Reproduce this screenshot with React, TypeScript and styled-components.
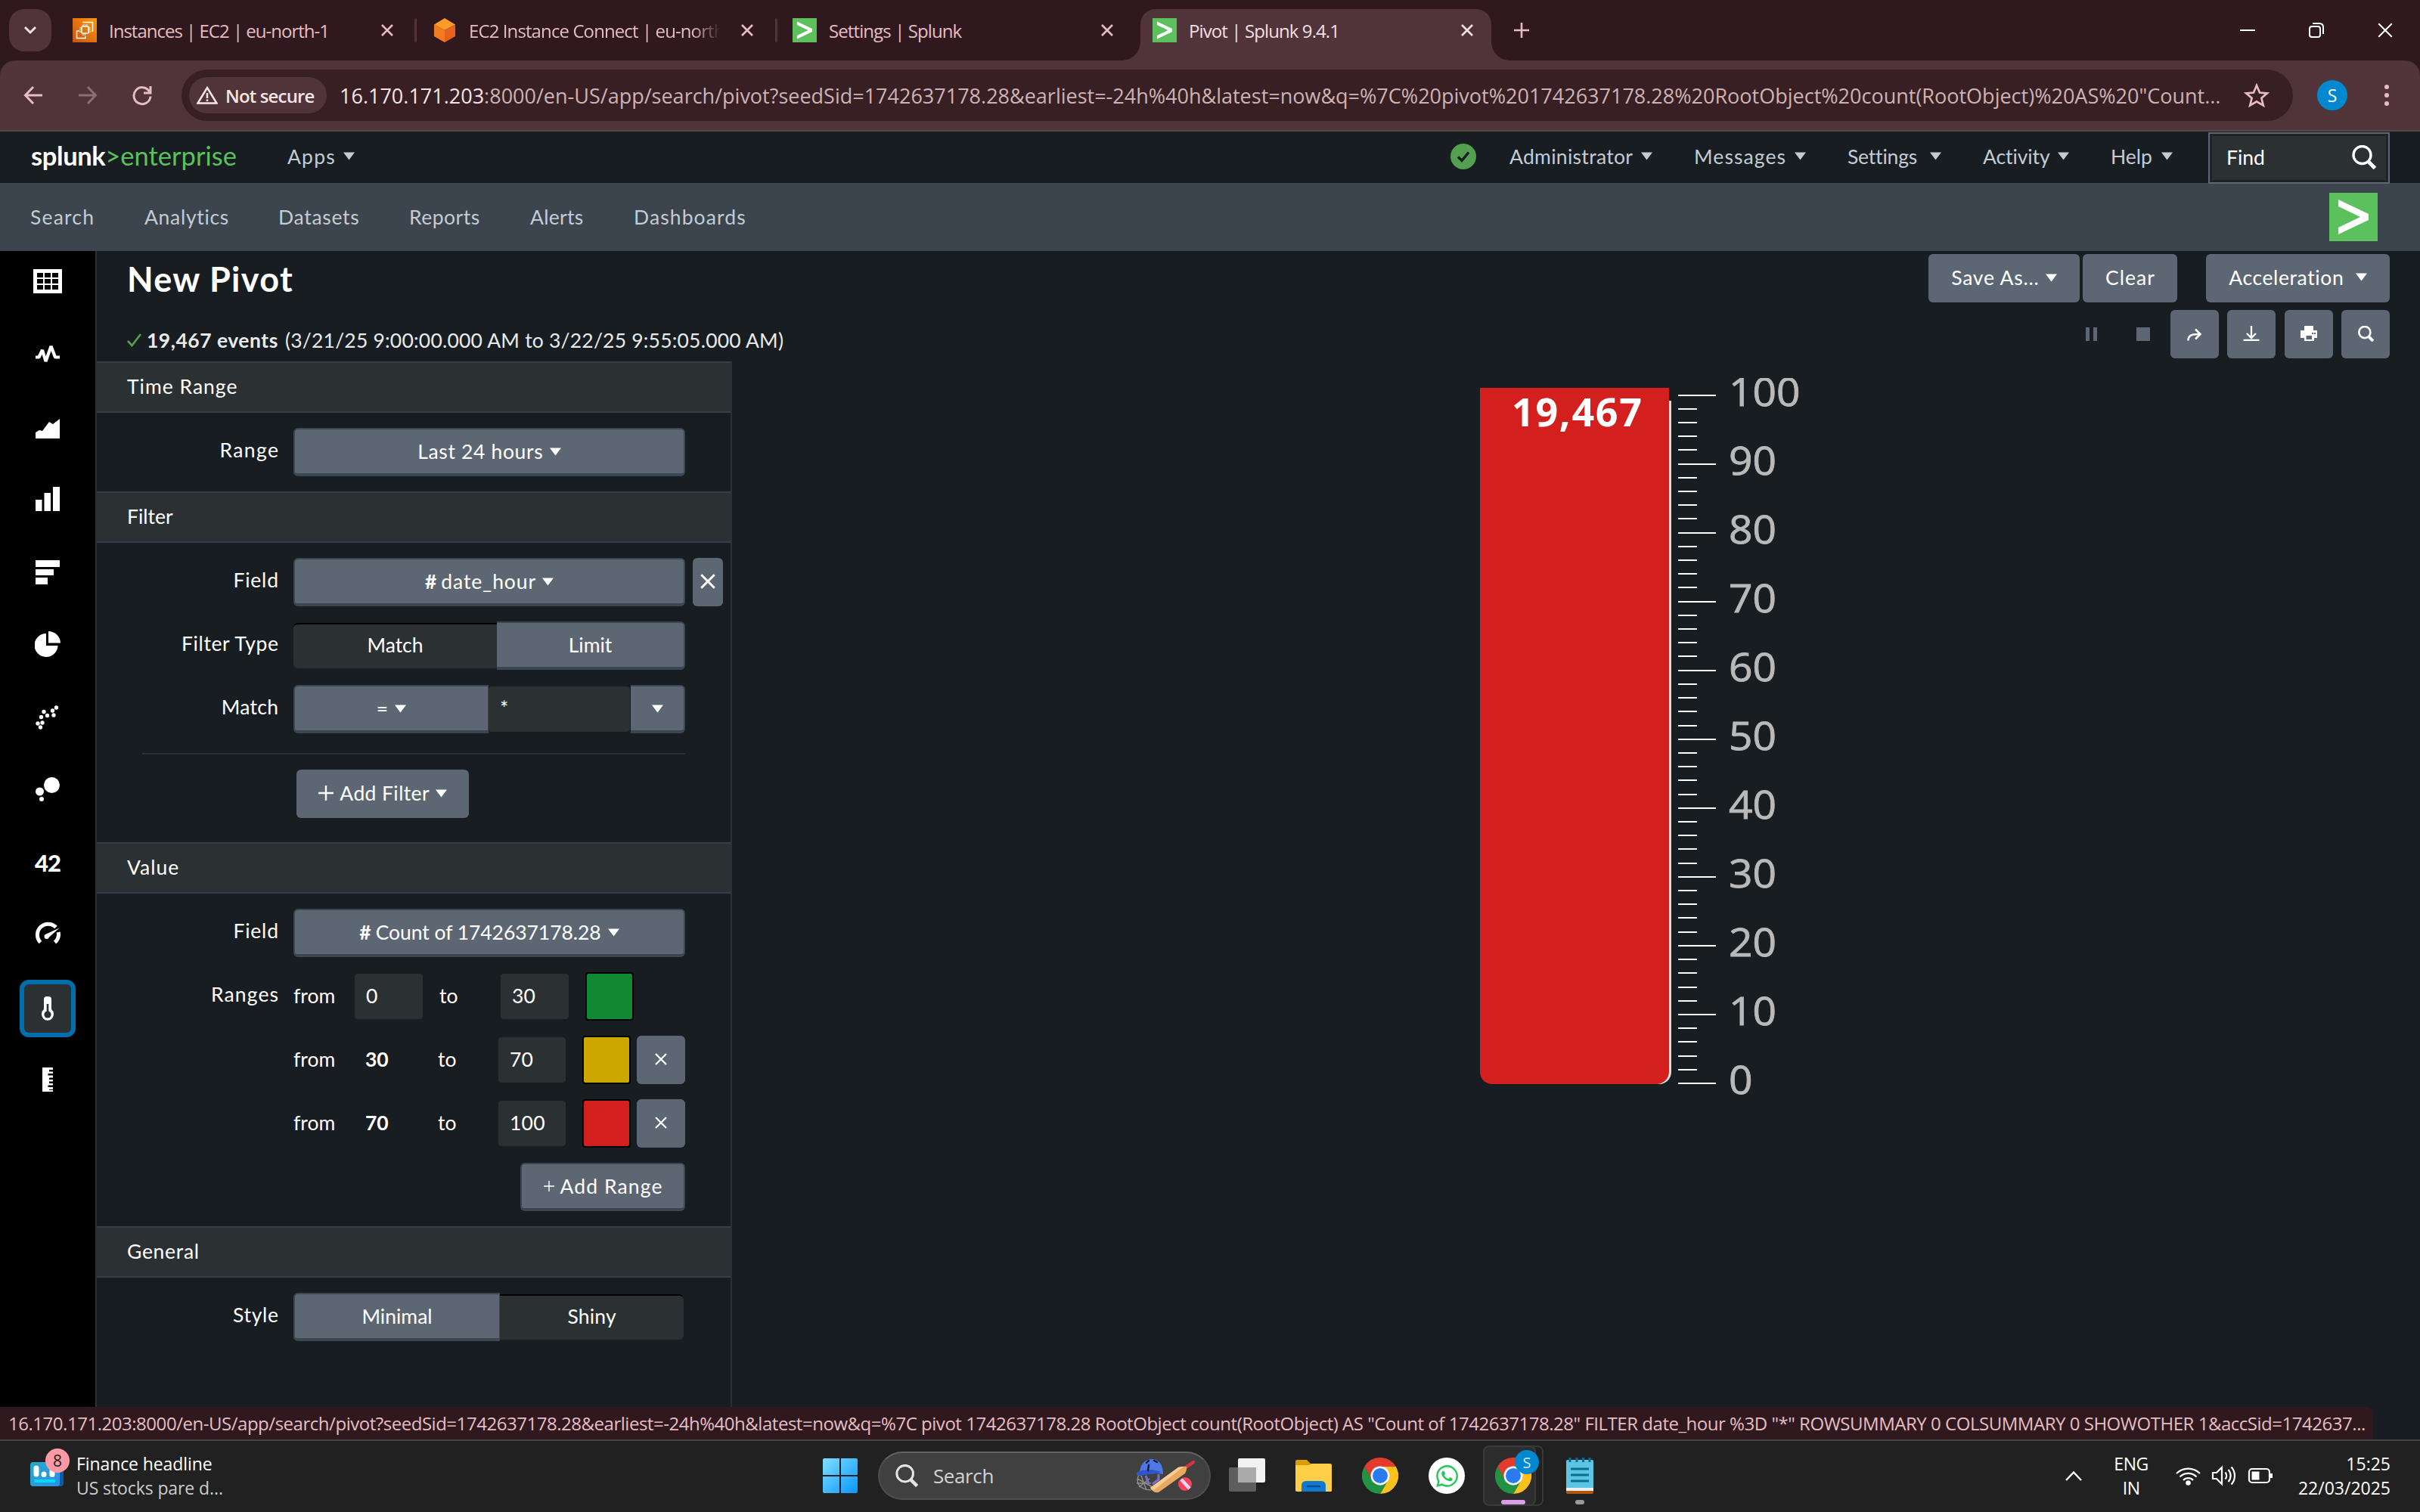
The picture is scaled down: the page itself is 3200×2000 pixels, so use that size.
import React from "react";
import styled, { createGlobalStyle } from "styled-components";
import { FaWhatsapp } from "react-icons/fa";

const ui = `"Open Sans", "Noto Sans", sans-serif`;
const app = `Lato, "Open Sans", sans-serif`;

const c = {
  strip: "#2f191e",
  toolbar: "#503439",
  omni: "#381f23",
  pink: "#e6bdc3",
  page: "#171d21",
  panel: "#2b3033",
  line: "#33414c",
  button: "#5c6773",
  edge: "#3a4752",
  nav: "#3c444d",
  navText: "#c3cbd4",
  green: "#5cc05c",
};

const Global = createGlobalStyle`
  * { box-sizing: border-box; }
  body { margin: 0; background: ${c.page}; }
  svg { display: block; flex: none; }
`;

const Screen = styled.div`
  width: 3200px;
  height: 2000px;
  display: flex;
  flex-direction: column;
  overflow: hidden;
  font-family: ${app};
  font-size: 26.5px;
  color: #fff;
  background: ${c.page};
`;

/* Text run: optional reserved width, tracking and weight. The negative margin
   drops the tracking that follows the last letter. */
const Txt = styled.span<{ $w?: number; $ls?: number; $b?: boolean }>`
  flex: none;
  white-space: pre;
  width: ${(p) => (p.$w ? `${p.$w}px` : "auto")};
  letter-spacing: ${(p) => p.$ls ?? 0}px;
  margin-right: ${(p) => (p.$w ? 0 : -(p.$ls ?? 0))}px;
  font-weight: ${(p) => (p.$b ? 700 : 400)};
`;

/* ---------- browser ---------- */

const TabStrip = styled.div`
  flex: none;
  height: 80px;
  display: flex;
  align-items: center;
  background: ${c.strip};
  font-family: ${ui};
  font-size: 24px;
  color: ${c.pink};
`;

const TabSearch = styled.div`
  width: 56px;
  height: 56px;
  margin-left: 12px;
  border-radius: 20px;
  background: ${c.toolbar};
  display: flex;
  align-items: center;
  justify-content: center;
`;

const Tab = styled.div<{ $w: number; $left: number }>`
  flex: none;
  width: ${(p) => p.$w}px;
  height: 56px;
  padding-left: ${(p) => p.$left}px;
  display: flex;
  align-items: center;
`;

const ActiveTab = styled.div`
  position: relative;
  flex: none;
  align-self: flex-end;
  width: 464px;
  height: 68px;
  padding: 0 0 12px 16px;
  border-radius: 20px 20px 0 0;
  background: ${c.toolbar};
  color: #f4dfe2;
  display: flex;
  align-items: center;
  &::before,
  &::after {
    content: "";
    position: absolute;
    bottom: 0;
    width: 24px;
    height: 24px;
  }
  &::before {
    left: -24px;
    background: radial-gradient(circle at 0 0, transparent 23.5px, ${c.toolbar} 24px);
  }
  &::after {
    right: -24px;
    background: radial-gradient(circle at 100% 0, transparent 23.5px, ${c.toolbar} 24px);
  }
`;

const TabTitle = styled.span<{ $w: number; $fade?: boolean; $ls?: number }>`
  flex: none;
  width: ${(p) => p.$w}px;
  margin-left: 16px;
  padding-top: 1px;
  overflow: hidden;
  white-space: pre;
  letter-spacing: ${(p) => p.$ls ?? -0.9}px;
  ${(p) => p.$fade && "mask-image: linear-gradient(90deg, #000 87%, transparent 98%);"}
`;

const Divider = styled.div`
  width: 3px;
  height: 32px;
  border-radius: 2px;
  background: ${c.toolbar};
`;

const WindowButtons = styled.div`
  margin-left: auto;
  padding-right: 36px;
  display: flex;
  gap: 71px;
`;

const ToolbarBack = styled.div`
  flex: none;
  background: ${c.strip};
`;

const Toolbar = styled.div`
  height: 94px;
  padding: 12px 0 0;
  border-bottom: 2px solid #524a48;
  border-radius: 20px 20px 0 0;
  background: ${c.toolbar};
  display: flex;
  align-items: flex-start;
`;

const ToolIcons = styled.div`
  width: 240px;
  height: 68px;
  padding-left: 30px;
  display: flex;
  align-items: center;
  gap: 44px;
`;

const Omnibox = styled.div`
  width: 2792px;
  height: 68px;
  padding-left: 10px;
  border-radius: 34px;
  background: ${c.omni};
  display: flex;
  align-items: center;
  font-family: ${ui};
`;

const Chip = styled.div`
  flex: none;
  width: 182px;
  height: 48px;
  padding-left: 10px;
  border-radius: 24px;
  background: ${c.toolbar};
  color: #f6e4e6;
  display: flex;
  align-items: center;
  gap: 10px;
  font-size: 24px;
  font-weight: 600;
  letter-spacing: -0.85px;
  white-space: pre;
`;

const Url = styled.div`
  flex: none;
  width: 2518px;
  margin-left: 17px;
  font-size: 27px;
  white-space: pre;
  color: #cdb3b6;
  b {
    font-weight: 400;
    color: #f6e4e6;
  }
`;

const Avatar = styled.div`
  width: 40px;
  height: 40px;
  margin: 14px 49px 0 32px;
  border-radius: 50%;
  background: #0288d1;
  color: #fff;
  display: flex;
  align-items: center;
  justify-content: center;
  font: 23px ${ui};
`;

const MoreDots = styled.div`
  height: 68px;
  display: flex;
  flex-direction: column;
  justify-content: center;
  gap: 5px;
  i {
    width: 6px;
    height: 6px;
    border-radius: 50%;
    background: ${c.pink};
  }
`;

/* ---------- splunk header ---------- */

const TopBar = styled.div`
  flex: none;
  height: 68px;
  padding-left: 41px;
  display: flex;
  align-items: center;
  color: ${c.navText};
`;

const Brand = styled.div`
  width: 339px;
  padding-bottom: 5px;
  font-size: 34.5px;
  white-space: pre;
  color: ${c.green};
  b {
    color: #fff;
    letter-spacing: -0.4px;
  }
`;

const Menu = styled.div<{ $w: number }>`
  flex: none;
  width: ${(p) => p.$w}px;
  padding-bottom: 3px;
  display: flex;
  align-items: center;
  gap: 10px;
`;

const FindBox = styled.div`
  align-self: flex-start;
  width: 240px;
  height: 68px;
  margin-top: 1px;
  padding: 0 16px 2px 22px;
  border: 2px solid ${c.button};
  background: ${c.panel};
  box-shadow: inset 0 0 0 3px #1d2326;
  color: #fff;
  display: flex;
  align-items: center;
  justify-content: space-between;
  z-index: 1;
`;

const SubNav = styled.div`
  flex: none;
  height: 90px;
  padding: 0 56px 0 40px;
  background: ${c.nav};
  color: ${c.navText};
  display: flex;
  align-items: center;
`;

const AppLogo = styled.div`
  margin-left: auto;
`;

/* ---------- body ---------- */

const Body = styled.div`
  position: relative;
  flex: none;
  height: 1572px;
  display: flex;
`;

const Rail = styled.div`
  flex: none;
  width: 128px;
  background: #000;
  border-right: 2px solid ${c.panel};
  display: flex;
  flex-direction: column;
  align-items: center;
`;

const RailItem = styled.div<{ $h: number }>`
  width: 100%;
  height: ${(p) => p.$h}px;
  display: flex;
  align-items: center;
  justify-content: center;
  font-size: 31px;
  font-weight: 900;
  letter-spacing: -1px;
`;

const RailSelected = styled.div`
  width: 74px;
  height: 76px;
  border: 6px solid #006eaa;
  border-radius: 12px;
  background: ${c.panel};
  display: flex;
  align-items: center;
  justify-content: center;
`;

const Content = styled.div`
  flex: 1;
  display: flex;
  flex-direction: column;
`;

const Header = styled.div`
  height: 146px;
  padding: 0 40px;
  display: flex;
  justify-content: space-between;
`;

const Title = styled.h1`
  margin: 0;
  height: 76px;
  line-height: 75px;
  font-size: 45px;
  font-weight: 700;
  letter-spacing: 1.3px;
`;

const Summary = styled.div`
  padding-top: 26px;
  display: flex;
  align-items: center;
  color: #e8eaec;
  line-height: 32px;
`;

const Actions = styled.div`
  display: flex;
  flex-direction: column;
  align-items: flex-end;
  gap: 10px;
  padding-top: 3px;
`;

const ActionRow = styled.div`
  display: flex;
  align-items: center;
`;

const Button = styled.div<{ $w: number; $ml?: number; $gap?: number; $mt?: number }>`
  flex: none;
  width: ${(p) => p.$w}px;
  height: 64px;
  margin-left: ${(p) => p.$ml ?? 0}px;
  margin-top: ${(p) => p.$mt ?? 0}px;
  border-radius: 6px;
  background: ${c.button};
  display: flex;
  align-items: center;
  justify-content: center;
  gap: ${(p) => p.$gap ?? 9}px;
  white-space: nowrap;
  padding-bottom: 2px;
`;

const Columns = styled.div`
  flex: 1;
  display: flex;
`;

const Form = styled.div`
  width: 840px;
  border-right: 2px solid ${c.panel};
`;

const SectionHead = styled.div`
  height: 68px;
  padding: 0 0 3px 40px;
  border-top: 2px solid ${c.line};
  border-bottom: 2px solid ${c.line};
  background: ${c.panel};
  display: flex;
  align-items: center;
`;

const Section = styled.div<{ $pb?: number }>`
  padding: 20px 0 ${(p) => p.$pb ?? 20}px;
  display: flex;
  flex-direction: column;
  gap: 20px;
`;

const Row = styled.div`
  height: 64px;
  display: grid;
  grid-template-columns: 240px auto;
  column-gap: 20px;
`;

const RowLabel = styled.div`
  padding-bottom: 7px;
  display: flex;
  align-items: center;
  justify-content: flex-end;
`;

const Controls = styled.div`
  display: flex;
  align-items: center;
`;

const FieldButton = styled(Button)<{ $side?: "l" | "r" }>`
  border: 2px solid ${c.edge};
  border-bottom-width: 4px;
  padding-bottom: 0;
  border-radius: ${(p) => (p.$side === "l" ? "6px 0 0 6px" : p.$side === "r" ? "0 6px 6px 0" : "6px")};
  ${(p) => p.$side === "l" && "border-right-width: 1px;"}
  ${(p) => p.$side === "r" && "border-left-width: 0;"}
`;

const Hash = styled.b`
  margin-right: -3px;
`;

const Pressed = styled.div<{ $w: number; $r: string }>`
  width: ${(p) => p.$w}px;
  height: 60px;
  padding-bottom: 4px;
  border-top: 2px solid #000;
  border-radius: ${(p) => p.$r};
  background: ${c.panel};
  display: flex;
  align-items: center;
  justify-content: center;
`;

const Input = styled.div<{ $w: number }>`
  flex: none;
  width: ${(p) => p.$w}px;
  height: 60px;
  padding: 0 0 3px 15px;
  border-radius: 4px;
  background: ${c.panel};
  display: flex;
  align-items: center;
  letter-spacing: 0.2px;
`;

const Rule = styled.div`
  height: 2px;
  margin: 6px 60px 0;
  background: ${c.panel};
`;

const Cell = styled.span<{ $w: number; $b?: boolean; $pad?: number }>`
  flex: none;
  width: ${(p) => p.$w}px;
  padding: 0 0 3px ${(p) => p.$pad ?? 0}px;
  font-weight: ${(p) => (p.$b ? 700 : 400)};
`;

const Swatch = styled.div<{ $c: string }>`
  width: 64px;
  height: 64px;
  margin-left: 22px;
  border: 2px solid #000;
  border-radius: 4px;
  background: ${(p) => p.$c};
`;

const Chart = styled.div`
  flex: 1;
  padding: 22px 0 0 989px;
`;

const StatusBar = styled.div`
  position: absolute;
  left: 0;
  bottom: 0;
  width: 3137px;
  height: 43px;
  padding: 0 0 1px 11px;
  border-top-right-radius: 8px;
  background: ${c.strip};
  color: ${c.pink};
  font: 24px ${ui};
  letter-spacing: -0.47px;
  white-space: pre;
  overflow: hidden;
  display: flex;
  align-items: center;
`;

/* ---------- taskbar ---------- */

const Taskbar = styled.div`
  flex: none;
  height: 96px;
  padding: 0 39px 2px 40px;
  border-top: 2px solid #444;
  background: #212121;
  font-family: ${ui};
  display: flex;
  align-items: center;
`;

const Widget = styled.div`
  width: 1048px;
  display: flex;
  align-items: center;
  gap: 16px;
  font-size: 23px;
  line-height: 32px;
  letter-spacing: -0.1px;
  color: #ccc;
  white-space: pre;
  div:first-of-type {
    color: #fff;
  }
`;

const SearchPill = styled.div`
  width: 440px;
  height: 64px;
  margin: 0 24px 0 27px;
  padding: 0 17px 0 21px;
  border: 2px solid #4e4e4e;
  border-top-color: #636363;
  border-radius: 32px;
  background: #404040;
  color: #d2d2d2;
  display: flex;
  align-items: center;
  gap: 20px;
  font-size: 26px;
  letter-spacing: -0.4px;
  span {
    flex: 1;
  }
`;

const Dock = styled.div`
  display: flex;
  align-items: center;
  gap: 40px;
`;

const ActiveApp = styled.div`
  position: relative;
  width: 70px;
  height: 80px;
  margin: 0 -1px 0 -16px;
  padding-left: 9px;
  border: 2px solid #3a3a3a;
  border-radius: 8px;
  background: #2d2d2d;
  box-shadow: 10px 0 0 -2px #212121, 10px 0 0 0 #383838;
  display: flex;
  align-items: center;
  justify-content: center;
`;

const AppBadge = styled.div`
  position: absolute;
  top: 4px;
  right: -6px;
  width: 32px;
  height: 32px;
  border-radius: 50%;
  background: #0288d1;
  color: #cfe8f6;
  display: flex;
  align-items: center;
  justify-content: center;
  font-size: 20px;
`;

const AppMark = styled.i<{ $w: number; $c: string; $b: number; $x?: number }>`
  position: absolute;
  left: calc(50% + ${(p) => p.$x ?? 0}px);
  bottom: ${(p) => p.$b}px;
  width: ${(p) => p.$w}px;
  height: 6px;
  transform: translateX(-50%);
  border-radius: 3px;
  background: ${(p) => p.$c};
`;

const RunningApp = styled.div`
  position: relative;
  margin-left: 1px;
`;

const Tray = styled.div`
  margin-left: auto;
  display: flex;
  align-items: center;
  color: #fff;
  font-size: 23px;
  line-height: 32px;
`;

const TrayText = styled.div<{ $align: "center" | "right"; $ls: number; $ml: number; $mr: number }>`
  text-align: ${(p) => p.$align};
  margin: 0 ${(p) => p.$mr}px 0 ${(p) => p.$ml}px;
  letter-spacing: ${(p) => p.$ls}px;
`;

/* ---------- drawings ---------- */

const Caret = () => (
  <svg width="15" height="11" viewBox="0 0 15 11">
    <path d="M0 0.5H15L7.5 10.5Z" fill="currentColor" />
  </svg>
);

const Cross = ({ s = 16, w = 2.6, color = "currentColor" }: { s?: number; w?: number; color?: string }) => (
  <svg width={s} height={s} viewBox="0 0 16 16">
    <path d="M1 1L15 15M15 1L1 15" stroke={color} strokeWidth={w} fill="none" />
  </svg>
);

const Plus = ({ s = 20, w = 2.4 }: { s?: number; w?: number }) => (
  <svg width={s} height={s} viewBox="0 0 20 20">
    <path d="M10 0V20M0 10H20" stroke="currentColor" strokeWidth={w} />
  </svg>
);

const SplunkMark = ({ s }: { s: number }) => (
  <svg width={s} height={s} viewBox="0 0 64 64">
    <rect width="64" height="64" fill={c.green} />
    <path d="M12 9V18L41 32L12 46V55L52 36V28Z" fill="#fff" />
  </svg>
);

const Ec2Icon = () => (
  <svg width="32" height="32" viewBox="0 0 32 32">
    <defs>
      <linearGradient id="ec2" x1="0" y1="1" x2="1" y2="0">
        <stop offset="0" stopColor="#c8511b" />
        <stop offset="1" stopColor="#f90" />
      </linearGradient>
    </defs>
    <rect width="32" height="32" fill="url(#ec2)" />
    <g fill="none" stroke="#fff" strokeWidth="1.5">
      <rect x="12" y="11" width="9" height="9" rx="1" />
      <path d="M14 8v3M16.5 8v3M19 8v3M14 20v3M16.5 20v3M9 13h3M9 15.5h3M9 18h3M21 13h3M21 15.5h3M21 18h3" strokeWidth="1.1" />
      <path d="M14 6V5.5H26.5V17H25M9 17H5.500V26.500H17V24" />
    </g>
  </svg>
);

const CubeIcon = () => (
  <svg width="32" height="32" viewBox="0 0 32 32">
    <path d="M16 0L30 8.5L16 16L2 8.5Z" fill="#ff9a28" />
    <path d="M2 8.5L16 16V32L2 24Z" fill="#f47b20" />
    <path d="M30 8.5L16 16V32L30 24Z" fill="#e8611c" />
  </svg>
);

const Search = ({ s, w = 2.4, color = "#fff" }: { s: number; w?: number; color?: string }) => (
  <svg width={s} height={s} viewBox="0 0 32 32" fill="none" stroke={color}>
    <circle cx="13.5" cy="13" r="11.5" strokeWidth={w} />
    <path d="M21.5 21.5L30.5 30.5" strokeWidth={w * 1.5} />
  </svg>
);

const W = "#fff";
const rail: { h: number; icon: React.ReactNode }[] = [
  {
    h: 80,
    icon: (
      <svg width="38" height="32" viewBox="0 0 38 32">
        <path d="M0 0H38V32H0Z M5 5V11H13V5Z M15 5V11H23V5Z M25 5V11H33V5Z M5 13V19H13V13Z M15 13V19H23V13Z M25 13V19H33V13Z M5 21V27H13V21Z M15 21V27H23V21Z M25 21V27H33V21Z" fill={W} fillRule="evenodd" />
      </svg>
    ),
  },
  {
    h: 112,
    icon: (
      <svg width="32" height="28" viewBox="0 0 32 28">
        <path d="M0 18.5H4.5L9 9L13.5 24L20.5 4L26 18.5H32" fill="none" stroke={W} strokeWidth="4.2" strokeLinejoin="bevel" />
      </svg>
    ),
  },
  {
    h: 86,
    icon: (
      <svg width="32" height="26" viewBox="0 0 32 26">
        <path d="M0 26V18L5 15L9 16L18 4L23 7L32 0V26Z" fill={W} />
      </svg>
    ),
  },
  {
    h: 100,
    icon: (
      <svg width="32" height="32" viewBox="0 0 32 32">
        <path d="M0 17H8.5V32H0ZM11.5 8H20V32H11.5ZM23 0H32V32H23Z" fill={W} />
      </svg>
    ),
  },
  {
    h: 93,
    icon: (
      <svg width="32" height="32" viewBox="0 0 32 32">
        <path d="M0 0H32V9H0ZM0 12H24V20H0ZM0 23H16V32H0Z" fill={W} />
      </svg>
    ),
  },
  {
    h: 98,
    icon: (
      <svg width="34" height="34" viewBox="0 0 34 34">
        <path d="M15 3A15.5 15.5 0 1 0 30.5 19H15Z" fill={W} />
        <path d="M18 0A16 16 0 0 1 34 15.5H18Z" fill={W} />
      </svg>
    ),
  },
  {
    h: 95,
    icon: (
      <svg width="32" height="32" viewBox="0 0 32 32" fill={W}>
        {[[3, 24], [6.5, 29], [9, 23], [7.5, 15.5], [11, 8.5], [15.5, 13.5], [22.5, 7], [24, 13], [27.5, 3]].map(([x, y]) => (
          <circle key={`${x}-${y}`} cx={x} cy={y} r="2.7" />
        ))}
      </svg>
    ),
  },
  {
    h: 96,
    icon: (
      <svg width="32" height="32" viewBox="0 0 32 32" fill={W}>
        <circle cx="21.5" cy="10.5" r="10.5" />
        <circle cx="5.5" cy="19" r="5.5" />
        <circle cx="8" cy="29" r="3" />
      </svg>
    ),
  },
  { h: 97, icon: "42" },
  {
    h: 90,
    icon: (
      <svg width="34" height="30" viewBox="0 0 34 30">
        <path d="M7.5 27.5A14.2 14.2 0 1 1 28 7.5M31.2 14A14.2 14.2 0 0 1 26.500 27.500" fill="none" stroke={W} strokeWidth="5" />
        <path d="M32.500 8.500L19 20.500A3.300 3.300 0 1 1 15 16.500Z" fill={W} />
      </svg>
    ),
  },
  {
    h: 110,
    icon: (
      <RailSelected>
        <svg width="18" height="32" viewBox="0 0 18 32">
          <path d="M4 4Q4 0 8 0H10Q14 0 14 4V17A8 8.300 0 1 1 4 17Z" fill={W} />
          <path d="M9 10V20" stroke={c.panel} strokeWidth="2.600" />
          <circle cx="9" cy="24" r="4.600" fill={c.panel} />
        </svg>
      </RailSelected>
    ),
  },
  {
    h: 78,
    icon: (
      <svg width="14" height="32" viewBox="0 0 14 32">
        <path d="M0 0H14V3H9V5.500H14V8H7.500V10.500H14V13.500H9V16H14V18.500H9V21H14V23.500H7.500V26H14V29H9V30H14V32H0Z" fill={W} />
      </svg>
    ),
  },
];

const Gauge = () => {
  const y = (v: number) => 933 - v * 9.105;
  const ticks = Array.from({ length: 51 }, (_, i) => i * 2);
  return (
    <svg width="480" height="980" viewBox="0 0 480 980">
      <path d="M30 30H253V918A16 16 0 0 1 238 934H16Z" fill="#d0d0cf" />
      <path d="M9 30H251.500V918A16 16 0 0 1 236 934H16Z" fill="#fff" />
      <path d="M0 13H250V918A16 16 0 0 1 234 934H16A16 16 0 0 1 0 918Z" fill="#d41f1f" />
      <text x="128" y="64" textAnchor="middle" fontFamily='"Open Sans", sans-serif' fontWeight="700" fontSize="52" textLength="172" fill="#fff">
        19,467
      </text>
      {ticks.map((v) => (
        <rect key={v} x="262" y={Math.round(y(v)) - 1} width={v % 10 ? 25 : 50} height="2" fill="#fff" />
      ))}
      {ticks
        .filter((v) => v % 10 === 0)
        .map((v) => (
          <text
            key={v}
            x="329"
            y={y(v) + 14}
            fontFamily='"Open Sans", sans-serif'
            fontSize="51"
            textLength={String(v).length * 31.5}
            lengthAdjust="spacingAndGlyphs"
            fill="#b9b9b9"
            stroke="#b9b9b9"
            strokeWidth="0.9"
          >
            {v}
          </text>
        ))}
    </svg>
  );
};

const Printer = () => (
  <svg width="22" height="20" viewBox="0 0 22 20">
    <path d="M5 0H17V6H22V16H18V20H5V16H0V6H5ZM7.5 13V18H15V13ZM15 9V11H17V9ZM18 9V11H20V9Z" fill="#fff" fillRule="evenodd" />
  </svg>
);

const Chrome = () => (
  <svg width="48" height="48" viewBox="0 0 48 48">
    <path d="M3.200 12A24 24 0 0 1 44.800 12H24A12 12 0 0 0 13.600 30Z" fill="#e33b2e" />
    <path d="M44.800 12A24 24 0 0 1 24 48L34.400 30A12 12 0 0 0 24 12Z" fill="#fcc21b" />
    <path d="M24 48A24 24 0 0 1 3.200 12L13.600 30A12 12 0 0 0 34.400 30Z" fill="#229342" />
    <circle cx="24" cy="24" r="12.500" fill="#fff" />
    <circle cx="24" cy="24" r="10" fill="#2a7bf0" />
  </svg>
);

const StartIcon = () => (
  <svg width="46" height="46" viewBox="0 0 46 46">
    <defs>
      <linearGradient id="start" x1="0" y1="0" x2="1" y2="1">
        <stop offset="0" stopColor="#7fe0ff" />
        <stop offset="1" stopColor="#0a95ff" />
      </linearGradient>
    </defs>
    <path d="M2 0H22V22H0V2Q0 0 2 0ZM24 0H44Q46 0 46 2V22H24ZM0 24H22V46H2Q0 46 0 44ZM24 24H46V44Q46 46 44 46H24Z" fill="url(#start)" />
  </svg>
);

const WidgetIcon = () => (
  <svg width="45" height="72" viewBox="0 0 45 72" overflow="visible">
    <defs>
      <linearGradient id="widget" x1="0" y1="0" x2="1" y2="1">
        <stop offset="0" stopColor="#27a9c9" />
        <stop offset="1" stopColor="#2f8fe6" />
      </linearGradient>
    </defs>
    <rect x="8" y="19" width="36" height="31" rx="4" fill="#0b5ba8" />
    <rect x="0" y="18" width="39" height="32" rx="4" fill="url(#widget)" />
    <path d="M8 26V34M18 34V34.500M29 30V34.500" stroke="#fff" strokeWidth="7" strokeLinecap="round" />
    <rect x="5" y="41" width="28" height="4" fill="#00dcff" />
    <circle cx="36" cy="16" r="16" fill="#ff9aa5" />
    <text x="36" y="24" textAnchor="middle" fontFamily='"Open Sans", sans-serif' fontSize="21" fill="#222">
      8
    </text>
  </svg>
);

const Cricket = () => (
  <svg width="80" height="46" viewBox="0 0 80 46">
    <g fill="none" stroke="#8f908c" strokeWidth="1.5">
      <path d="M4 22C-1 32 4 41 20 42M2 27L22 38M1 33H20M7 23L14 42M4 38L18 27" />
    </g>
    <path d="M13 23L17 34M30 21V28L22 34" stroke="#7b6cc4" strokeWidth="3.200" fill="none" />
    <path d="M5 17C7 5 14 1 22 1C32 2 36 10 36 21L28 19.500L2 23Q-1 19 5 17Z" fill="#4f78e6" />
    <path d="M5 17C14 14 26 15 34 18L28 20L2 23Q-1 19 5 17Z" fill="#2f55c8" />
    <path d="M17 9L16 16M14 6L17 3M24 3L28 5" stroke="#141c3c" strokeWidth="2.400" strokeLinecap="round" />
    <path d="M66 12L76 5" stroke="#dd2f45" strokeWidth="4.500" strokeLinecap="round" />
    <path d="M56 12Q62 10 67 11Q68 15 65 20L30 45Q22 46 19 39Z" fill="#e9a860" />
    <path d="M56 12Q60 10.500 63 11L24 42Q20 41 19 39Z" fill="#f8cd95" />
    <circle cx="65" cy="34" r="9" fill="#f4435a" />
    <path d="M60 28L71 40" stroke="#f3d4f4" strokeWidth="4.500" />
  </svg>
);

const TaskView = () => (
  <svg width="48" height="46" viewBox="0 0 48 46">
    <rect x="12" y="0" width="36" height="32" rx="2" fill="#f2f2f2" />
    <rect x="0" y="12" width="36" height="32" rx="2" fill="#5e5e5e" />
    <rect x="12" y="12" width="24" height="20" fill="#ababab" />
  </svg>
);

const Folder = () => (
  <svg width="48" height="44" viewBox="0 0 48 44">
    <path d="M0 3Q0 1 2 1H15L20 6H45V20H0Z" fill="#dc9d00" />
    <path d="M0 8H18L22 6H46Q48 6 48 8V42Q48 43 46 43H2Q0 43 0 41Z" fill="#ffcf48" />
    <path d="M8 43V35Q8 29 14 29H34Q40 29 40 35V43Z" fill="#1279d0" />
    <path d="M15 36H33" stroke="#0a4c94" strokeWidth="2.500" />
  </svg>
);

const WhatsApp = styled.div`
  width: 48px;
  height: 48px;
  border-radius: 50%;
  background: #fff;
  color: #25c75b;
  display: flex;
  align-items: center;
  justify-content: center;
`;

const Notepad = () => (
  <svg width="36" height="48" viewBox="0 0 36 48">
    <rect x="0" y="3" width="36" height="40" rx="2" fill="#5cc6e2" />
    <path d="M5 0V6M14 0V6M22.5 0V6M31 0V6" stroke="#0b6c93" strokeWidth="3" />
    <path d="M6 15H30M6 23H30M6 31H30" stroke="#0b6c93" strokeWidth="3" />
    <rect x="0" y="40" width="36" height="4" fill="#eee" />
    <path d="M0 44H36V46Q36 48 34 48H2Q0 48 0 46Z" fill="#b3560d" />
  </svg>
);

const menus = [
  { t: "Administrator", w: 244, tw: 164, ls: 0.3 },
  { t: "Messages", w: 203, tw: 123, ls: 1.1 },
  { t: "Settings", w: 179, tw: 99, ls: -0.2 },
  { t: "Activity", w: 169, tw: 89, ls: -0.1 },
  { t: "Help", w: 129, tw: 57, ls: 0 },
];

const navs = [
  { t: "Search", w: 151, ls: 1.2 },
  { t: "Analytics", w: 177, ls: 0.7 },
  { t: "Datasets", w: 173, ls: 0.7 },
  { t: "Reports", w: 160, ls: 0.5 },
  { t: "Alerts", w: 137, ls: 0.3 },
  { t: "Dashboards", w: 150, ls: 1.1 },
];

export default function App() {
  return (
    <Screen>
      <Global />
      <TabStrip>
        <TabSearch>
          <svg width="18" height="12" viewBox="0 0 18 12">
            <path d="M2 2L9 9L16 2" fill="none" stroke="#f4dfe2" strokeWidth="3" />
          </svg>
        </TabSearch>
        <Tab $w={480} $left={28}>
          <Ec2Icon />
          <TabTitle $w={360} $ls={-1}>
            Instances | EC2 | eu-north-1
          </TabTitle>
          <Cross />
        </Tab>
        <Divider />
        <Tab $w={474} $left={21}>
          <CubeIcon />
          <TabTitle $w={340} $fade>
            EC2 Instance Connect | eu-north
          </TabTitle>
          <svg width="20" height="1" />
          <Cross />
        </Tab>
        <Divider />
        <Tab $w={480} $left={20}>
          <SplunkMark s={32} />
          <TabTitle $w={360}>Settings | Splunk</TabTitle>
          <Cross />
        </Tab>
        <ActiveTab>
          <SplunkMark s={32} />
          <TabTitle $w={360}>Pivot | Splunk 9.4.1</TabTitle>
          <Cross />
        </ActiveTab>
        <Tab $w={80} $left={30}>
          <Plus w={2.6} />
        </Tab>
        <WindowButtons>
          <svg width="20" height="20" viewBox="0 0 20 20">
            <path d="M0 10H20" stroke="#fff" strokeWidth="2" />
          </svg>
          <svg width="20" height="20" viewBox="0 0 20 20" fill="none" stroke="#fff" strokeWidth="2">
            <rect x="1" y="5" width="14" height="14" rx="3" />
            <path d="M5 1H14Q19 1 19 6V15" />
          </svg>
          <Cross s={20} w={1.6} color="#fff" />
        </WindowButtons>
      </TabStrip>

      <ToolbarBack>
        <Toolbar>
          <ToolIcons>
            <svg width="28" height="28" viewBox="0 0 28 28" fill="none" stroke={c.pink} strokeWidth="3">
              <path d="M26 14H4M14 3L3.500 14L14 25" />
            </svg>
            <svg width="28" height="28" viewBox="0 0 28 28" fill="none" stroke="#8c6d72" strokeWidth="3">
              <path d="M2 14H24M14 3L24.500 14L14 25" />
            </svg>
            <svg width="28" height="28" viewBox="0 0 28 28" fill="none" stroke={c.pink} strokeWidth="3">
              <path d="M23.500 9A11 11 0 1 0 25 15.500M25 2V11H16" />
            </svg>
          </ToolIcons>
          <Omnibox>
            <Chip>
              <svg width="28" height="24" viewBox="0 0 28 24">
                <path d="M14 2L26.500 22.500H1.500Z" fill="none" stroke="#f6e4e6" strokeWidth="2.500" />
                <path d="M14 9V16M14 17.500V20" stroke="#f6e4e6" strokeWidth="2.500" />
              </svg>
              Not secure
            </Chip>
            <Url>
              <b>16.170.171.203</b>
              {`:8000/en-US/app/search/pivot?seedSid=1742637178.28&earliest=-24h%40h&latest=now&q=%7C%20pivot%201742637178.28%20RootObject%20count(RootObject)%20AS%20"Count...`}
            </Url>
            <svg width="34" height="32" viewBox="0 0 34 32">
              <path d="M17 3L21 12.500L31 13.300L23.400 19.800L25.800 29.500L17 24.300L8.200 29.500L10.600 19.800L3 13.300L13 12.500Z" fill="none" stroke={c.pink} strokeWidth="2.700" />
            </svg>
          </Omnibox>
          <Avatar>S</Avatar>
          <MoreDots>
            <i />
            <i />
            <i />
          </MoreDots>
        </Toolbar>
      </ToolbarBack>

      <TopBar>
        <Brand>
          <b>splunk</b>&gt;enterprise
        </Brand>
        <Menu $w={1538}>
          <Txt $w={64} $ls={1.2}>
            Apps
          </Txt>
          <Caret />
        </Menu>
        <Menu $w={78}>
          <svg width="34" height="34" viewBox="0 0 34 34">
            <circle cx="17" cy="17" r="17" fill="#53a051" />
            <path d="M10 17.500L15 22.500L24 11.500" fill="none" stroke={c.page} strokeWidth="3.500" />
          </svg>
        </Menu>
        {menus.map((m) => (
          <Menu key={m.t} $w={m.w}>
            <Txt $w={m.tw} $ls={m.ls}>
              {m.t}
            </Txt>
            <Caret />
          </Menu>
        ))}
        <FindBox>
          Find
          <Search s={32} w={3.400} />
        </FindBox>
      </TopBar>
      <SubNav>
        {navs.map((n) => (
          <Txt key={n.t} $w={n.w} $ls={n.ls}>
            {n.t}
          </Txt>
        ))}
        <AppLogo>
          <SplunkMark s={64} />
        </AppLogo>
      </SubNav>

      <Body>
        <Rail>
          {rail.map((r, i) => (
            <RailItem key={i} $h={r.h}>
              {r.icon}
            </RailItem>
          ))}
        </Rail>
        <Content>
          <Header>
            <div>
              <Title>New Pivot</Title>
              <Summary>
                <svg width="26" height="18" viewBox="0 0 26 18">
                  <path d="M1 10L6.500 16L18 1" fill="none" stroke="#53a051" strokeWidth="2.600" />
                </svg>
                <Txt $b $w={183} $ls={0.5}>
                  19,467 events
                </Txt>
                <Txt $ls={0.2}>(3/21/25 9:00:00.000 AM to 3/22/25 9:55:05.000 AM)</Txt>
              </Summary>
            </div>
            <Actions>
              <ActionRow>
                <Button $w={200} $mt={1}>
                  <Txt $ls={0.8}>Save As...</Txt>
                  <Caret />
                </Button>
                <Button $w={125} $ml={4} $mt={1}>
                  <Txt $ls={1}>Clear</Txt>
                </Button>
                <Button $w={243} $ml={38} $gap={16}>
                  <Txt $ls={0.6}>Acceleration</Txt>
                  <Caret />
                </Button>
              </ActionRow>
              <ActionRow>
                <svg width="112" height="18" viewBox="0 0 112 18" fill="#5c6773">
                  <path d="M0 0H5V18H0ZM10 0H15V18H10ZM67 0H85V18H67Z" />
                </svg>
                <Button $w={64}>
                  <svg width="20" height="20" viewBox="0 0 20 20" fill="none" stroke="#fff" strokeWidth="2.500">
                    <path d="M1.500 19.500C1.500 12.500 6 11 16 11M11 4.500L17.500 11L11 17.500" />
                  </svg>
                </Button>
                <Button $w={64} $ml={11}>
                  <svg width="22" height="20" viewBox="0 0 22 20" fill="none" stroke="#fff" strokeWidth="2.300">
                    <path d="M11 0V15M5 10L11 16L17 10M0.500 19H21.500" />
                  </svg>
                </Button>
                <Button $w={64} $ml={12}>
                  <Printer />
                </Button>
                <Button $w={64} $ml={11}>
                  <Search s={21} w={4} />
                </Button>
              </ActionRow>
            </Actions>
          </Header>
          <Columns>
            <Form>
              <SectionHead>
                <Txt $ls={1}>Time Range</Txt>
              </SectionHead>
              <Section>
                <Row>
                  <RowLabel>
                    <Txt $ls={1.4}>Range</Txt>
                  </RowLabel>
                  <Controls>
                    <FieldButton $w={518}>
                      <Txt $ls={0.65}>Last 24 hours</Txt>
                      <Caret />
                    </FieldButton>
                  </Controls>
                </Row>
              </Section>
              <SectionHead>Filter</SectionHead>
              <Section $pb={32}>
                <Row>
                  <RowLabel>
                    <Txt $ls={0.8}>Field</Txt>
                  </RowLabel>
                  <Controls>
                    <FieldButton $w={518}>
                      <Hash>#</Hash>
                      <Txt $ls={0.9}>date_hour</Txt>
                      <Caret />
                    </FieldButton>
                    <Button $w={40} $ml={10}>
                      <Cross s={20} w={2.400} />
                    </Button>
                  </Controls>
                </Row>
                <Row>
                  <RowLabel>
                    <Txt $ls={0.6}>Filter Type</Txt>
                  </RowLabel>
                  <Controls>
                    <Pressed $w={269} $r="6px 0 0 6px">
                      Match
                    </Pressed>
                    <FieldButton $w={249} $side="r">
                      Limit
                    </FieldButton>
                  </Controls>
                </Row>
                <Row>
                  <RowLabel>
                    <Txt $ls={0.3}>Match</Txt>
                  </RowLabel>
                  <Controls>
                    <FieldButton $w={258} $side="l">
                      <Txt>=</Txt>
                      <Caret />
                    </FieldButton>
                    <Input $w={187}>*</Input>
                    <FieldButton $w={72} $ml={1} $side="r">
                      <Caret />
                    </FieldButton>
                  </Controls>
                </Row>
                <Rule />
                <Row>
                  <span />
                  <Controls>
                    <Button $w={228} $ml={4} $gap={8}>
                      <Plus />
                      <Txt $ls={0.4}>Add Filter</Txt>
                      <Caret />
                    </Button>
                  </Controls>
                </Row>
              </Section>
              <SectionHead>
                <Txt $ls={1}>Value</Txt>
              </SectionHead>
              <Section>
                <Row>
                  <RowLabel>
                    <Txt $ls={0.8}>Field</Txt>
                  </RowLabel>
                  <Controls>
                    <FieldButton $w={518}>
                      <Hash>#</Hash>
                      <Txt $ls={-0.05}>Count of 1742637178.28</Txt>
                      <Caret />
                    </FieldButton>
                  </Controls>
                </Row>
                <Row>
                  <RowLabel>
                    <Txt $ls={1.1}>Ranges</Txt>
                  </RowLabel>
                  <Controls>
                    <Cell $w={81}>from</Cell>
                    <Input $w={90}>0</Input>
                    <Cell $w={103} $pad={22}>
                      to
                    </Cell>
                    <Input $w={90}>30</Input>
                    <Swatch $c="#118832" />
                  </Controls>
                </Row>
                {[
                  { from: 30, to: 70, color: "#cba700" },
                  { from: 70, to: 100, color: "#d41f1f" },
                ].map((r) => (
                  <Row key={r.from}>
                    <span />
                    <Controls>
                      <Cell $w={81}>from</Cell>
                      <Cell $w={90} $pad={14} $b>
                        {r.from}
                      </Cell>
                      <Cell $w={100} $pad={20}>
                        to
                      </Cell>
                      <Input $w={89}>{r.to}</Input>
                      <Swatch $c={r.color} />
                      <Button $w={64} $ml={8}>
                        <Cross s={16} w={2.200} />
                      </Button>
                    </Controls>
                  </Row>
                ))}
                <Row>
                  <span />
                  <Controls>
                    <FieldButton $w={218} $ml={300} $gap={8}>
                      <Plus s={14} w={2} />
                      <Txt $ls={1.1}>Add Range</Txt>
                    </FieldButton>
                  </Controls>
                </Row>
              </Section>
              <SectionHead>
                <Txt $ls={0.7}>General</Txt>
              </SectionHead>
              <Section>
                <Row>
                  <RowLabel>
                    <Txt $ls={0.7}>Style</Txt>
                  </RowLabel>
                  <Controls>
                    <FieldButton $w={273} $side="l">
                      Minimal
                    </FieldButton>
                    <Pressed $w={243} $r="0 6px 6px 0">
                      <Txt $ls={0.2}>Shiny</Txt>
                    </Pressed>
                  </Controls>
                </Row>
              </Section>
            </Form>
            <Chart>
              <Gauge />
            </Chart>
          </Columns>
        </Content>
        <StatusBar>
          {`16.170.171.203:8000/en-US/app/search/pivot?seedSid=1742637178.28&earliest=-24h%40h&latest=now&q=%7C pivot 1742637178.28 RootObject count(RootObject) AS "Count of 1742637178.28" FILTER date_hour %3D "*" ROWSUMMARY 0 COLSUMMARY 0 SHOWOTHER 1&accSid=1742637...`}
        </StatusBar>
      </Body>

      <Taskbar>
        <Widget>
          <WidgetIcon />
          <section>
            <div>Finance headline</div>
            US stocks pare d...
          </section>
        </Widget>
        <StartIcon />
        <SearchPill>
          <Search s={30} w={3.200} color="#e6e6e6" />
          <span>Search</span>
          <Cricket />
        </SearchPill>
        <Dock>
          <TaskView />
          <Folder />
          <Chrome />
          <WhatsApp>
            <FaWhatsapp size={33} />
          </WhatsApp>
          <ActiveApp>
            <Chrome />
            <AppBadge>S</AppBadge>
            <AppMark $w={32} $c="#d99ee5" $b={0} $x={5} />
          </ActiveApp>
          <RunningApp>
            <Notepad />
            <AppMark $w={12} $c="#9a9a9a" $b={-14} />
          </RunningApp>
        </Dock>
        <Tray>
          <svg width="22" height="13" viewBox="0 0 22 13">
            <path d="M1 12L11 1.500L21 12" fill="none" stroke="#fff" strokeWidth="2.400" />
          </svg>
          <TrayText $align="center" $ml={42} $mr={36} $ls={-0.4}>
            ENG
            <br />
            IN
          </TrayText>
          <svg width="128" height="28" viewBox="0 0 128 28" fill="none" stroke="#fff" strokeWidth="2.200">
            <path d="M1 11A22 22 0 0 1 32 11M5.500 15.500A15.500 15.500 0 0 1 27.500 15.500M10 20A9 9 0 0 1 23 20" />
            <circle cx="16.500" cy="23.500" r="2.200" fill="#fff" />
            <path d="M49 10H54L61 3V25L54 18H49ZM65.500 9.500A7 7 0 0 1 65.500 18.500M69.500 6A12 12 0 0 1 69.500 22M73.500 2.500A17 17 0 0 1 73.500 25.500" />
            <rect x="97" y="5" width="27" height="18" rx="4" />
            <path d="M126.500 11V17" strokeWidth="3" />
            <rect x="100.500" y="8.500" width="10" height="11" fill="#fff" stroke="none" />
          </svg>
          <TrayText $align="right" $ml={34} $mr={0} $ls={0}>
            15:25
            <br />
            22/03/2025
          </TrayText>
        </Tray>
      </Taskbar>
    </Screen>
  );
}
